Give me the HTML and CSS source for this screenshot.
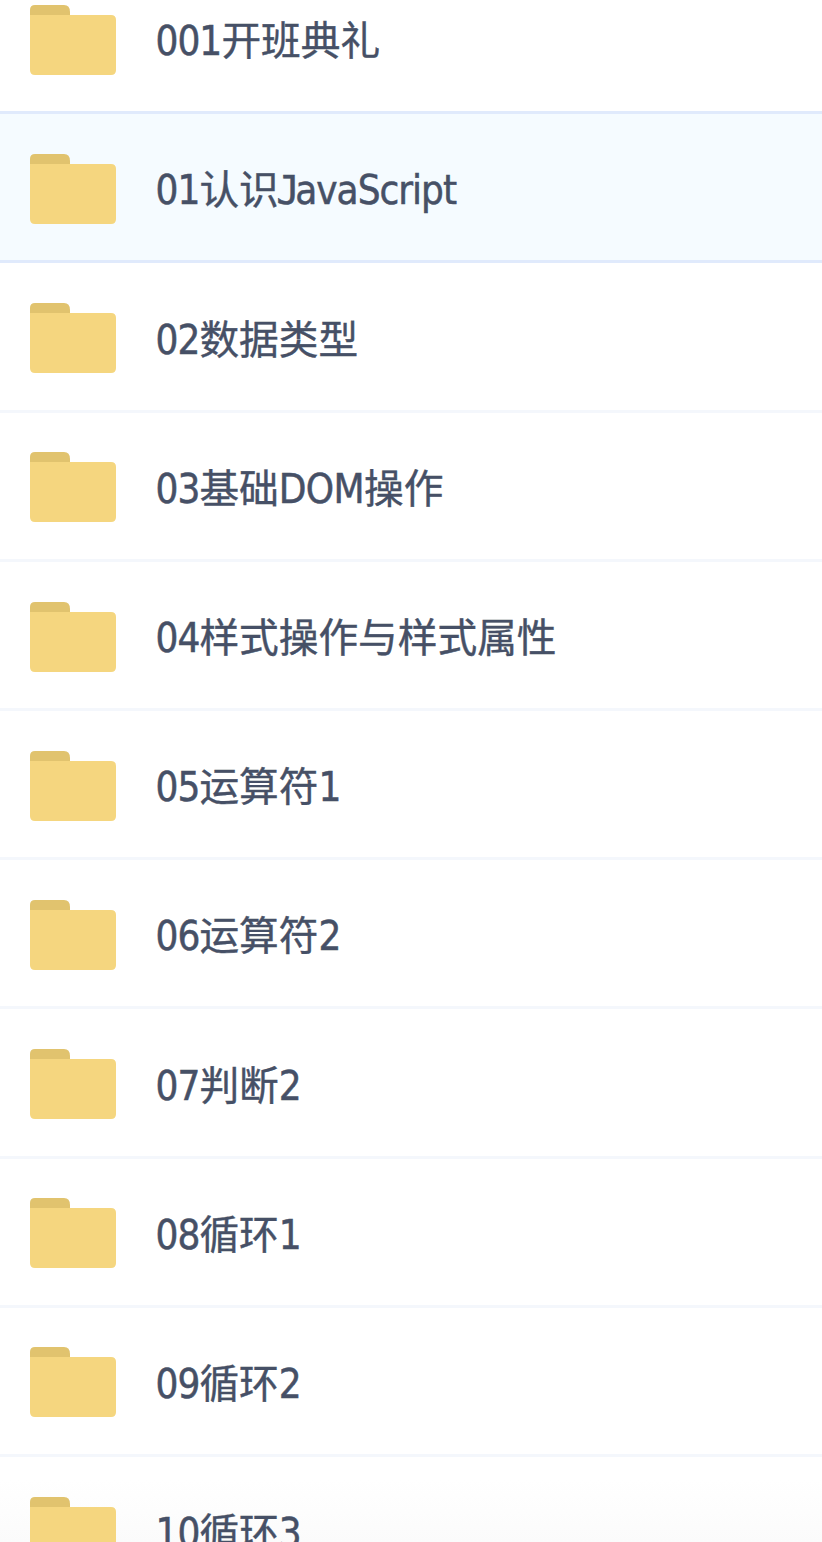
FILE: index.html
```html
<!DOCTYPE html>
<html lang="zh-CN">
  <head>
    <meta charset="UTF-8" />
    <meta name="viewport" content="width=device-width, initial-scale=1.0" />
    <title>课程文件</title>
    <link rel="stylesheet" href="styles.css">
  </head>
  <body>
    <svg class="sprite" width="0" height="0">
      <symbol id="folder" viewBox="0 0 88 72">
        <path d="M1 16V6q0-5 5-5h29q6 0 6 7v8z" fill="#e1c36e" />
        <path d="M1 11h81q5 0 5 5v50q0 5-5 5H6q-5 0-5-5z" fill="#f5d67f" />
      </symbol>
    </svg>

    <ul class="file-list">
      <li class="file-item"><svg class="folder"><use href="#folder" /></svg><span class="name"><span class="latin">001</span>开班典礼</span></li>
      <li class="file-item active"><svg class="folder"><use href="#folder" /></svg><span class="name"><span class="latin">01</span>认识<span class="latin word"><span class="cap-j">J</span>avaScript</span></span></li>
      <li class="file-item"><svg class="folder"><use href="#folder" /></svg><span class="name"><span class="latin">02</span>数据类型</span></li>
      <li class="file-item"><svg class="folder"><use href="#folder" /></svg><span class="name"><span class="latin">03</span>基础<span class="latin word">DOM</span>操作</span></li>
      <li class="file-item"><svg class="folder"><use href="#folder" /></svg><span class="name"><span class="latin">04</span>样式操作与样式属性</span></li>
      <li class="file-item"><svg class="folder"><use href="#folder" /></svg><span class="name"><span class="latin">05</span>运算符<span class="latin">1</span></span></li>
      <li class="file-item"><svg class="folder"><use href="#folder" /></svg><span class="name"><span class="latin">06</span>运算符<span class="latin">2</span></span></li>
      <li class="file-item"><svg class="folder"><use href="#folder" /></svg><span class="name"><span class="latin">07</span>判断<span class="latin">2</span></span></li>
      <li class="file-item"><svg class="folder"><use href="#folder" /></svg><span class="name"><span class="latin">08</span>循环<span class="latin">1</span></span></li>
      <li class="file-item"><svg class="folder"><use href="#folder" /></svg><span class="name"><span class="latin">09</span>循环<span class="latin">2</span></span></li>
      <li class="file-item last"><svg class="folder"><use href="#folder" /></svg><span class="name"><span class="latin">10</span>循环<span class="latin">3</span></span></li>
    </ul>
  </body>
</html>
```
FILE: styles.css
```css
body {
  margin: 0;
  height: 1542px;
  overflow: hidden;
  background-color: #fff;
  font-family: "Noto Sans CJK SC", sans-serif;
  color: #465066;
}

.sprite {
  display: none;
}

.file-list {
  list-style: none;
  margin: -35px 0 0;
  padding: 0;
}

.file-item {
  display: flex;
  align-items: center;
  gap: 38.8px;
  box-sizing: border-box;
  height: 149.2px;
  padding: 3.4px 0 0 28.6px;
  border-bottom: 3px solid #f4f7fc;
}

.file-item:first-child {
  border-bottom-color: #e0eafc;
}

.file-item.active {
  background-color: #f5fbff;
  border-bottom-color: #e0eafc;
}

.file-item.last {
  background: linear-gradient(#fff 15%, #fafafa 70%);
}

.folder {
  width: 88px;
  height: 72px;
  flex: none;
}

.name {
  margin-bottom: 3px;
  font-size: 39.7px;
  line-height: 60px;
  white-space: nowrap;
  -webkit-text-stroke: 0.4px #465066;
}

.latin {
  font-family: "DejaVu Sans Condensed", "DejaVu Sans", sans-serif;
  font-stretch: condensed;
  font-size: 40px;
  line-height: 1;
  letter-spacing: -0.9px;
  -webkit-text-stroke: 0.5px #465066;
}

.word {
  letter-spacing: -0.6px;
}

.active .word {
  letter-spacing: -1px;
}

/* J with a top bar that stays on the baseline */
.cap-j {
  margin: 0 -3.5px 0 -2.5px;
  font-family: "DejaVu Sans Mono", monospace;
  font-size: 39px;
}
```
